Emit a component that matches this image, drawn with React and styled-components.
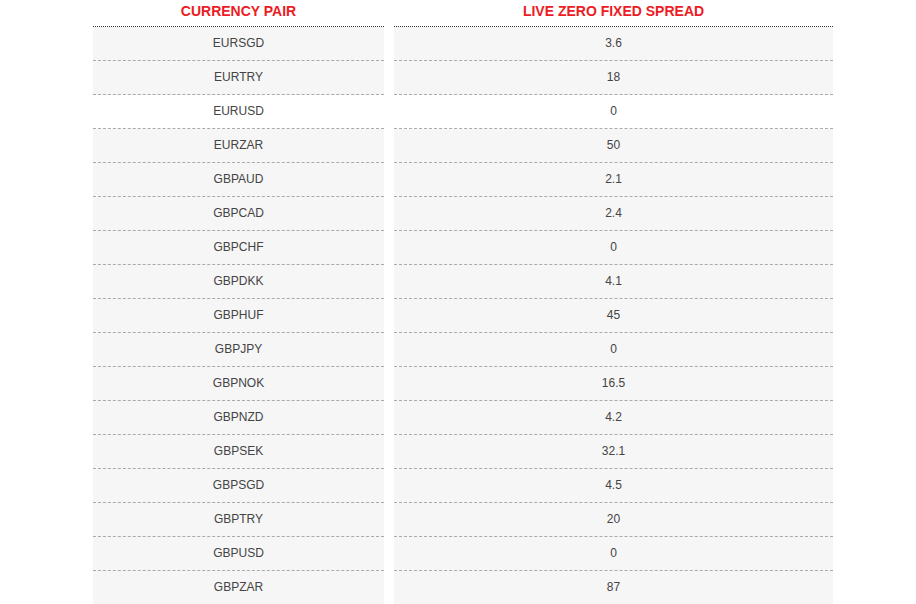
import styled, { createGlobalStyle } from "styled-components"

const GlobalStyle = createGlobalStyle`
    html, body {
        margin: 0;
        padding: 0;
        background: #FFFFFF;
        font-family: "Liberation Sans", Arial, sans-serif;
    }
`

const spreads = [
    ['EURSGD', '3.6'],
    ['EURTRY', '18'],
    ['EURUSD', '0'],
    ['EURZAR', '50'],
    ['GBPAUD', '2.1'],
    ['GBPCAD', '2.4'],
    ['GBPCHF', '0'],
    ['GBPDKK', '4.1'],
    ['GBPHUF', '45'],
    ['GBPJPY', '0'],
    ['GBPNOK', '16.5'],
    ['GBPNZD', '4.2'],
    ['GBPSEK', '32.1'],
    ['GBPSGD', '4.5'],
    ['GBPTRY', '20'],
    ['GBPUSD', '0'],
    ['GBPZAR', '87'],
]

export default function App(){
    return (
        <>
            <GlobalStyle />
            <Page>
                <Table>
                    <Head>Currency pair</Head>
                    <Head>Live zero fixed spread</Head>
                    {spreads.map(([pair, spread], index) => (
                        <Row key={pair}>
                            <Cell plain={index === 2}>{pair}</Cell>
                            <Cell plain={index === 2}>{spread}</Cell>
                        </Row>
                    ))}
                </Table>
            </Page>
        </>
    )
}

const Page = styled.div`
    width: 916px;
    height: 604px;
    overflow: hidden;
    padding-left: 93px;
    box-sizing: border-box;
`

const Table = styled.div`
    display: grid;
    grid-template-columns: 291px 439px;
    column-gap: 10px;
`

const Row = styled.div`
    display: contents;
`

const Head = styled.div`
    padding: 3px 0 7px;
    line-height: 16px;
    font-size: 14px;
    font-weight: bold;
    text-transform: uppercase;
    text-align: center;
    color: #ED1C24;
    border-bottom: 1px dotted #333333;
`

const Cell = styled.div`
    padding: 8px 0 9px;
    line-height: 16px;
    font-size: 12px;
    text-align: center;
    color: #444444;
    background: ${props => props.plain ? '#FFFFFF' : '#F6F6F6'};
    border-bottom: 1px dashed #AAAAAA;
`
